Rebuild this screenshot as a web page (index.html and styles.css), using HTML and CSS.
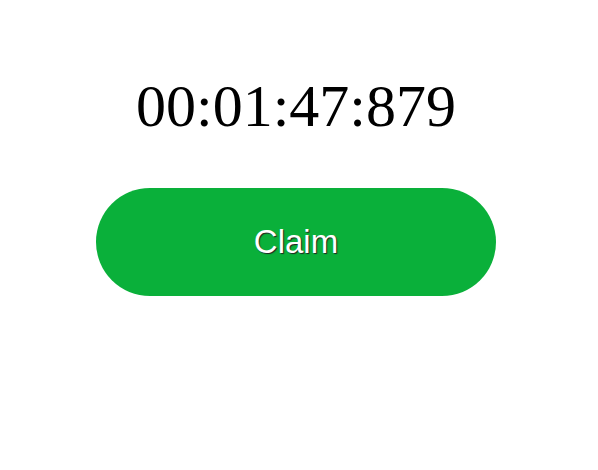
FILE: index.html
```html
<!DOCTYPE html>
<html>
<head>
<meta charset="utf-8">
<link rel="stylesheet" href="styles.css">
</head>
<body>
<div class="wrap">
  <div class="timer">00:01:47:879</div>
  <button class="claim">Claim</button>
</div>
</body>
</html>
```
FILE: styles.css
```css
html, body { margin: 0; padding: 0; background: #fff; }
.wrap {
  display: flex;
  flex-direction: column;
  align-items: center;
  width: 400px;
  padding: 72px 0 0 96px;
}
.timer {
  font-family: "Liberation Serif", "Times New Roman", serif;
  font-size: 60px;
  line-height: 69px;
  color: #000;
}
.claim {
  margin-top: 47px;
  width: 400px;
  height: 108px;
  border: none;
  border-radius: 54px;
  background: #0ab03a;
  color: #fff;
  font-family: "Liberation Sans", Arial, sans-serif;
  font-size: 33px;
  text-shadow: 1px 1px 1px #222;
}
```
